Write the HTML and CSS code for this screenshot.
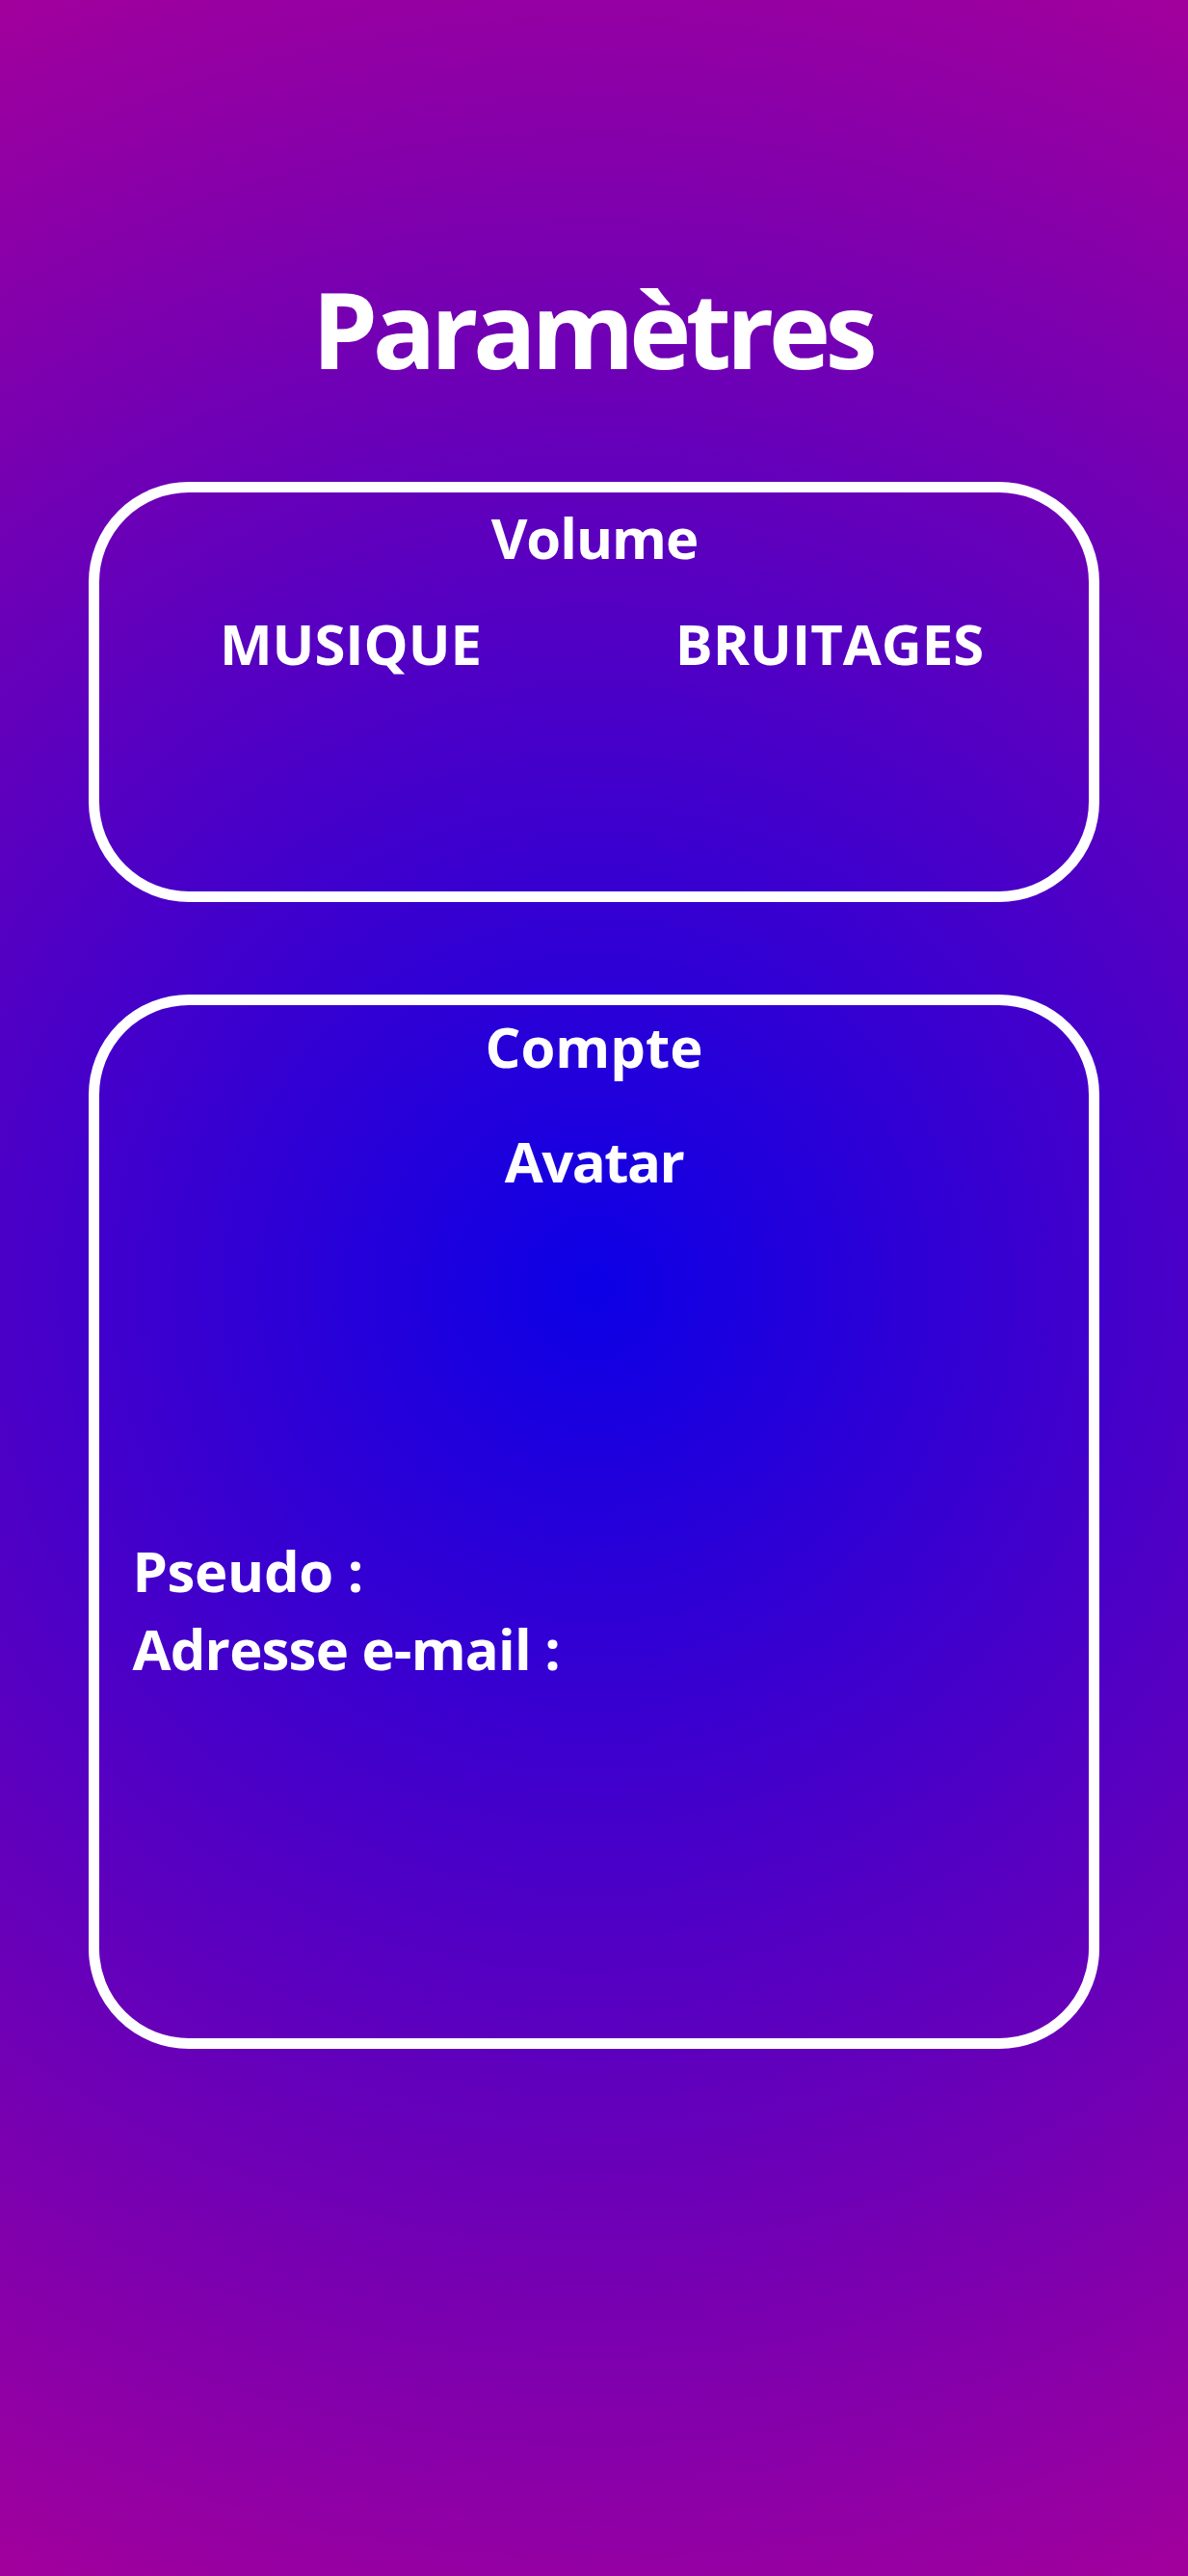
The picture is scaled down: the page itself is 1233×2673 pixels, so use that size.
FILE: index.html
```html
<!DOCTYPE html>
<html lang="fr">
<head>
<meta charset="utf-8">
<title>Paramètres</title>
<link rel="stylesheet" href="styles.css">
</head>
<body>
<main class="page">
  <h1 class="title">Paramètres</h1>
  <section class="card card-volume">
    <h2 class="card-title card-title-volume">Volume</h2>
    <div class="volume-grid">
      <div class="volume-col"><h3 class="volume-label">MUSIQUE</h3></div>
      <div class="volume-col"><h3 class="volume-label">BRUITAGES</h3></div>
    </div>
  </section>
  <section class="card card-account">
    <h2 class="card-title">Compte</h2>
    <h3 class="avatar-label">Avatar</h3>
    <div class="avatar-slot"></div>
    <p class="field">Pseudo :</p>
    <p class="field field-email">Adresse e-mail :</p>
  </section>
</main>
</body>
</html>
```
FILE: styles.css
```css
html, body {
  margin: 0;
  padding: 0;
}
body {
  min-height: 100vh;
  background: radial-gradient(circle at 50% 50%, #0c00e6 0%, #a2009c 100%);
  color: #fff;
  font-family: "Open Sans", "Noto Sans", sans-serif;
  font-weight: 700;
}
.page {
  display: flex;
  flex-direction: column;
  align-items: center;
  padding-top: 286px;
}
.title {
  margin: 0 0 105px;
  padding-right: 4px;
  font-size: 109px;
  line-height: 1;
  font-weight: 700;
  letter-spacing: -5.5px;
}
.card {
  width: 85%;
  box-sizing: border-box;
  border: 11px solid #fff;
  border-radius: 104px;
}
.card-volume {
  height: 436px;
  padding: 18px 20px 0 12px;
}
.card-title {
  margin: 0;
  font-size: 58px;
  line-height: 1;
  text-align: center;
  font-weight: 700;
}
.card-title-volume {
  letter-spacing: -1px;
  padding-left: 9px;
}
.volume-grid {
  display: grid;
  grid-template-columns: 1fr 1fr;
  margin-top: 52px;
}
.volume-col {
  text-align: center;
}
.volume-label {
  margin: 0;
  font-size: 58px;
  line-height: 1;
  font-weight: 700;
}
.card-account {
  margin-top: 96px;
  height: 1094px;
  padding: 14px 32px 0;
}
.avatar-label {
  margin: 61px 0 0;
  font-size: 58px;
  line-height: 1;
  text-align: center;
  font-weight: 700;
  letter-spacing: -1.5px;
}
.avatar-slot {
  height: 355px;
}
.field {
  margin: 0;
  padding-left: 2px;
  font-size: 58px;
  line-height: 81px;
  letter-spacing: -0.3px;
}
.field-email {
  letter-spacing: -0.8px;
}
```
